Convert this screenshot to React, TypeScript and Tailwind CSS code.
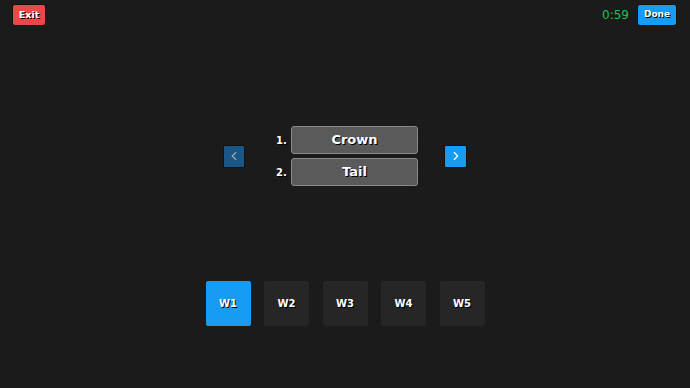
import { ChevronLeft, ChevronRight } from "lucide-react";

const words = ["Crown", "Tail"];
const slots = ["W1", "W2", "W3", "W4", "W5"];

const font = "[font-family:'DejaVu_Sans',sans-serif]";
const shadow = "[text-shadow:1px_1px_0_#000]";

export default function App() {
  return (
    <div className={`flex h-[388px] w-[690px] flex-col bg-[#1b1b1b] ${font}`}>
      {/* top bar */}
      <div className="flex items-center pl-[12px] pr-[13px] pt-1">
        <button className={`h-[22px] w-[34px] rounded-[3px] border border-[#111] bg-[#ea4848] text-[9.5px] font-bold text-white ${shadow}`}>
          Exit
        </button>
        <span className="ml-auto mr-[8px] text-[12px] text-[#21c24f] [font-variant-numeric:tabular-nums]">
          0:59
        </span>
        <button className={`h-[22px] w-[40px] rounded-[3px] border border-[#111] bg-[#169cf2] text-[9px] font-bold text-white ${shadow}`}>
          Done
        </button>
      </div>

      {/* ordering row */}
      <div className="mt-[100px] flex items-center justify-center">
        <button className="flex h-[23px] w-[22px] items-center justify-center rounded-[2px] border border-[#111] bg-[#1a5787] text-[#9aa9b6]">
          <ChevronLeft size={14} strokeWidth={2} />
        </button>
        <div className="ml-[31px] flex flex-col gap-[4px]">
          {words.map((w, i) => (
            <div key={w} className="flex items-center">
              <span className={`w-[15px] text-[10px] font-bold text-white ${shadow}`}>{i + 1}.</span>
              <div className={`flex h-[28px] w-[127px] items-center justify-center rounded-[3px] border border-[#8a8a8a] bg-[#5a5a5a] text-[13px] font-bold text-white ${shadow}`}>
                {w}
              </div>
            </div>
          ))}
        </div>
        <button className="ml-[26px] flex h-[23px] w-[23px] items-center justify-center rounded-[2px] border border-[#111] bg-[#169cf2] text-white">
          <ChevronRight size={14} strokeWidth={2} />
        </button>
      </div>

      {/* slot picker */}
      <div className="mt-[95px] flex justify-center gap-[13.5px]">
        {slots.map((s, i) => (
          <button
            key={s}
            className={`h-[45px] w-[45px] rounded-[2px] text-[10px] font-bold text-white ${shadow} ${
              i === 0 ? "bg-[#169cf2]" : "bg-[#262626]"
            }`}
          >
            {s}
          </button>
        ))}
      </div>
    </div>
  );
}
